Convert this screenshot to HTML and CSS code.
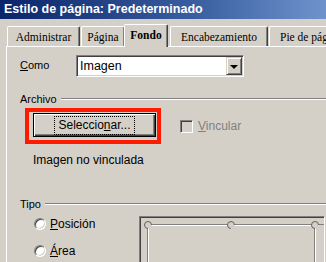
FILE: index.html
```html
<!DOCTYPE html>
<html lang="es">
<head>
<meta charset="utf-8">
<title>Estilo de página</title>
<link rel="stylesheet" href="styles.css">
</head>
<body>
<div class="window">
  <div class="titlebar">Estilo de página: Predeterminado</div>
  <div class="tabs">
    <div class="tab t1">Administrar</div>
    <div class="tab t2">Página</div>
    <div class="tab t3 sel">Fondo</div>
    <div class="tab t4">Encabezamiento</div>
    <div class="tab t5">Pie de pág</div>
  </div>
  <div class="panel">
    <div class="row-como">
      <span class="label"><u>C</u>omo</span>
      <div class="select">
        <span class="select-text">Imagen</span>
        <span class="select-btn"><span class="arrow"></span></span>
      </div>
    </div>

    <div class="group-h archivo">Archivo</div>
    <div class="row-file">
      <div class="redbox">
        <div class="button"><span class="focus">Seleccio<u>n</u>ar...</span></div>
      </div>
      <span class="check"></span>
      <span class="disabled"><u>V</u>incular</span>
    </div>
    <div class="note">Imagen no vinculada</div>

    <div class="group-h tipo">Tipo</div>
    <div class="row-tipo">
      <div class="radios">
        <div class="radio-row"><span class="radio"></span><span><u>P</u>osición</span></div>
        <div class="radio-row"><span class="radio"></span><span><u>Á</u>rea</span></div>
      </div>
      <div class="preview">
        <svg width="190" height="50" viewBox="0 0 190 50">
          <line x1="7" y1="6.5" x2="190" y2="6.5" stroke="#808080"/>
          <line x1="7" y1="7.5" x2="174" y2="7.5" stroke="#ffffff"/>
          <line x1="6.5" y1="7" x2="6.5" y2="50" stroke="#808080"/>
          <line x1="7.5" y1="8" x2="7.5" y2="50" stroke="#ffffff"/>
          <line x1="173.5" y1="8" x2="173.5" y2="50" stroke="#808080"/>
          <line x1="174.5" y1="8" x2="174.5" y2="50" stroke="#ffffff"/>
          <g fill="#d4d0c8">
            <circle cx="7" cy="7" r="3.5" stroke="#606060"/>
            <circle cx="90" cy="7" r="3.5" stroke="#606060"/>
            <circle cx="174" cy="7" r="3.5" stroke="#606060"/>
          </g>
          <g fill="none" stroke="#ffffff">
            <path d="M10.5 7 A3.5 3.5 0 0 1 7 10.5"/>
            <path d="M93.5 7 A3.5 3.5 0 0 1 90 10.5"/>
            <path d="M177.5 7 A3.5 3.5 0 0 1 174 10.5"/>
          </g>
        </svg>
      </div>
    </div>
  </div>
</div>
</body>
</html>
```
FILE: styles.css
```css
html, body {
  margin: 0;
  padding: 0;
}
body {
  background: #d4d0c8;
  width: 326px;
  height: 262px;
  overflow: hidden;
  font-family: "Liberation Sans", Arial, sans-serif;
  font-size: 11px;
  color: #000;
}
.window {
  width: 326px;
  height: 262px;
  overflow: hidden;
}
.titlebar {
  height: 19px;
  line-height: 19px;
  padding-left: 4px;
  background: linear-gradient(to right, #0a246a 0%, #3a5fa0 60%, #6e93cc 100%);
  color: #fff;
  font-weight: bold;
  font-size: 12.5px;
  white-space: nowrap;
}
.tabs {
  display: flex;
  align-items: flex-end;
  height: 22px;
  margin-top: 5px;
  padding-left: 7px;
  white-space: nowrap;
}
.tab {
  box-sizing: border-box;
  height: 20px;
  flex: none;
  border-top: 1px solid #fff;
  border-left: 1px solid #fff;
  border-right: 1px solid #404040;
  box-shadow: inset -1px 0 #808080;
  border-radius: 2px 2px 0 0;
  font-family: "Liberation Serif", "Times New Roman", serif;
  font-size: 11.5px;
  display: flex;
  align-items: center;
  justify-content: center;
  padding-top: 1px;
  background: #d4d0c8;
  overflow: hidden;
}
.t1 { width: 73px; }
.t2 { width: 44px; margin-left: 1px; }
.t3 { width: 44px; margin-left: -1px; }
.t4 { width: 98px; margin-left: 2px; }
.t5 { width: 70px; margin-left: 1px; justify-content: flex-start; padding-left: 10px; }
.tab.sel {
  height: 23px;
  margin-bottom: -1px;
  font-weight: bold;
  position: relative;
  z-index: 1;
  padding-top: 0;
  padding-bottom: 2px;
}
.panel {
  margin-left: 6px;
  border-top: 1px solid #fff;
  border-left: 1px solid #fff;
  padding-left: 13px;
  height: 230px;
}
.row-como {
  display: flex;
  align-items: center;
  margin-top: 8px;
  height: 22px;
}
.label {
  width: 56px;
  margin-top: -2px;
}
.select {
  box-sizing: border-box;
  width: 168px;
  height: 22px;
  border: 1px solid;
  border-color: #808080 #fff #fff #808080;
  box-shadow: inset 1px 1px #404040, inset -1px -1px #d4d0c8;
  background: #fff;
  display: flex;
  align-items: stretch;
  padding: 1px;
}
.select-text {
  flex: 1;
  font-size: 12.5px;
  line-height: 18px;
  padding-left: 2px;
}
.select-btn {
  box-sizing: border-box;
  width: 16px;
  background: #d4d0c8;
  border: 1px solid;
  border-color: #d4d0c8 #404040 #404040 #d4d0c8;
  box-shadow: inset 1px 1px #fff, inset -1px -1px #808080;
  display: flex;
  align-items: center;
  justify-content: center;
}
.arrow {
  width: 0;
  height: 0;
  border-left: 4px solid transparent;
  border-right: 4px solid transparent;
  border-top: 4px solid #000;
  margin-top: 1px;
}
.group-h {
  display: flex;
  align-items: center;
  gap: 4px;
  height: 13px;
  line-height: 13px;
}
.group-h::after {
  content: "";
  flex: 1;
  border-top: 1px solid #808080;
  border-bottom: 1px solid #fff;
  margin-top: -1px;
}
.archivo {
  margin-top: 16px;
}
.row-file {
  display: flex;
  align-items: center;
  margin-top: 2px;
}
.redbox {
  margin-left: 5px;
  border: 4px solid #ff1a00;
  padding: 1px 1px 3px 4px;
}
.button {
  box-sizing: border-box;
  width: 123px;
  height: 24px;
  border: 1px solid #000;
  box-shadow: inset 1px 1px #fff, inset -1px -1px #404040, inset -2px -2px #808080;
  display: flex;
  align-items: center;
  justify-content: center;
  font-size: 12px;
}
.focus {
  outline: 1px dotted #000;
  outline-offset: 1px;
  padding: 1px 2px;
  line-height: 13px;
}
.check {
  box-sizing: border-box;
  width: 13px;
  height: 13px;
  margin-left: 19px;
  border: 1px solid;
  border-color: #808080 #fff #fff #808080;
  box-shadow: inset 1px 1px #404040, inset -1px -1px #d4d0c8;
  background: #d4d0c8;
}
.disabled {
  color: #808080;
  margin-left: 5px;
  font-size: 12px;
}
.note {
  margin-top: 10px;
  margin-left: 13px;
  line-height: 13px;
  font-size: 12px;
}
.tipo {
  margin-top: 31px;
}
.row-tipo {
  display: flex;
  align-items: flex-start;
}
.radios {
  box-sizing: border-box;
  width: 119px;
  padding-left: 14px;
  margin-top: 6px;
  display: flex;
  flex-direction: column;
  gap: 13px;
}
.radio-row {
  display: flex;
  align-items: center;
  gap: 4px;
  height: 14px;
  font-size: 12px;
}
.radio {
  box-sizing: border-box;
  width: 12px;
  height: 12px;
  border-radius: 50%;
  border: 1px solid;
  border-color: #808080 #fff #fff #808080;
  box-shadow: inset 1px 1px #404040, inset -1px -1px #d4d0c8;
  background: #fff;
}
.preview {
  box-sizing: border-box;
  margin-top: 5px;
  width: 186px;
  height: 52px;
  border: 1px solid;
  border-color: #808080 #fff #fff #808080;
  box-shadow: inset 1px 1px #404040;
  padding: 1px 0 0 1px;
  overflow: hidden;
}
.preview svg {
  display: block;
}
```
